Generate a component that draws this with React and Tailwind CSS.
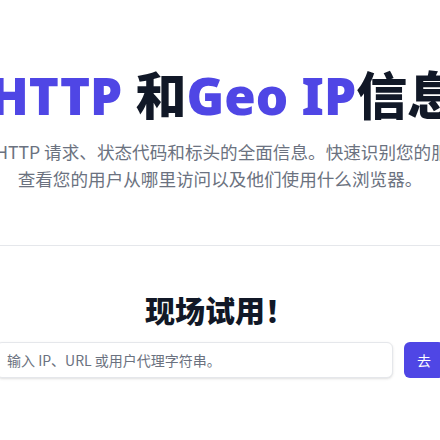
import React from "react";

const App = () => {
    return (
        <div className="w-full min-h-[440px] overflow-hidden bg-white font-['Noto_Sans_CJK_SC',sans-serif]">
            <div className="flex flex-col items-center pt-[70px]">
                {/* Hero */}
                <h1 className="ml-2 whitespace-nowrap font-['Noto_Sans','Noto_Sans_CJK_SC',sans-serif] text-[51px] leading-none font-black text-[#111827]">
                    <span className="text-[#4f46e5]">HTTP</span> 和<span className="text-[#4f46e5]">Geo IP</span>信息
                </h1>
                <p className="mt-[17px] whitespace-nowrap text-center text-[17.6px] leading-[27px] text-[#6b7280]">
                    您可获取有关 HTTP 请求、状态代码和标头的全面信息。快速识别您的服务器的位置，
                    <br />
                    查看您的用户从哪里访问以及他们使用什么浏览器。
                </p>
            </div>

            <hr className="mt-[53px] border-t border-[#e5e7eb]" />

            {/* Try it */}
            <div className="flex flex-col items-center pb-12">
                <h2 className="mt-[45px] whitespace-nowrap text-3xl font-black text-[#111827]">现场试用！</h2>
                <form className="mt-[15px] flex w-[448px] shrink-0 gap-[11px]" onSubmit={e => e.preventDefault()}>
                    <input
                        type="text"
                        placeholder="输入 IP、URL 或用户代理字符串。"
                        className="h-9 min-w-0 flex-1 rounded-md border border-[#e5e7eb] bg-white px-2.5 text-sm text-[#111827] shadow-sm placeholder:text-[#6b7280] focus:outline-none"
                    />
                    <button type="submit" className="flex h-9 w-10 items-center justify-center rounded-md bg-[#4f46e5] text-sm text-white">
                        去
                    </button>
                </form>
            </div>
        </div>
    );
};

export default App;
